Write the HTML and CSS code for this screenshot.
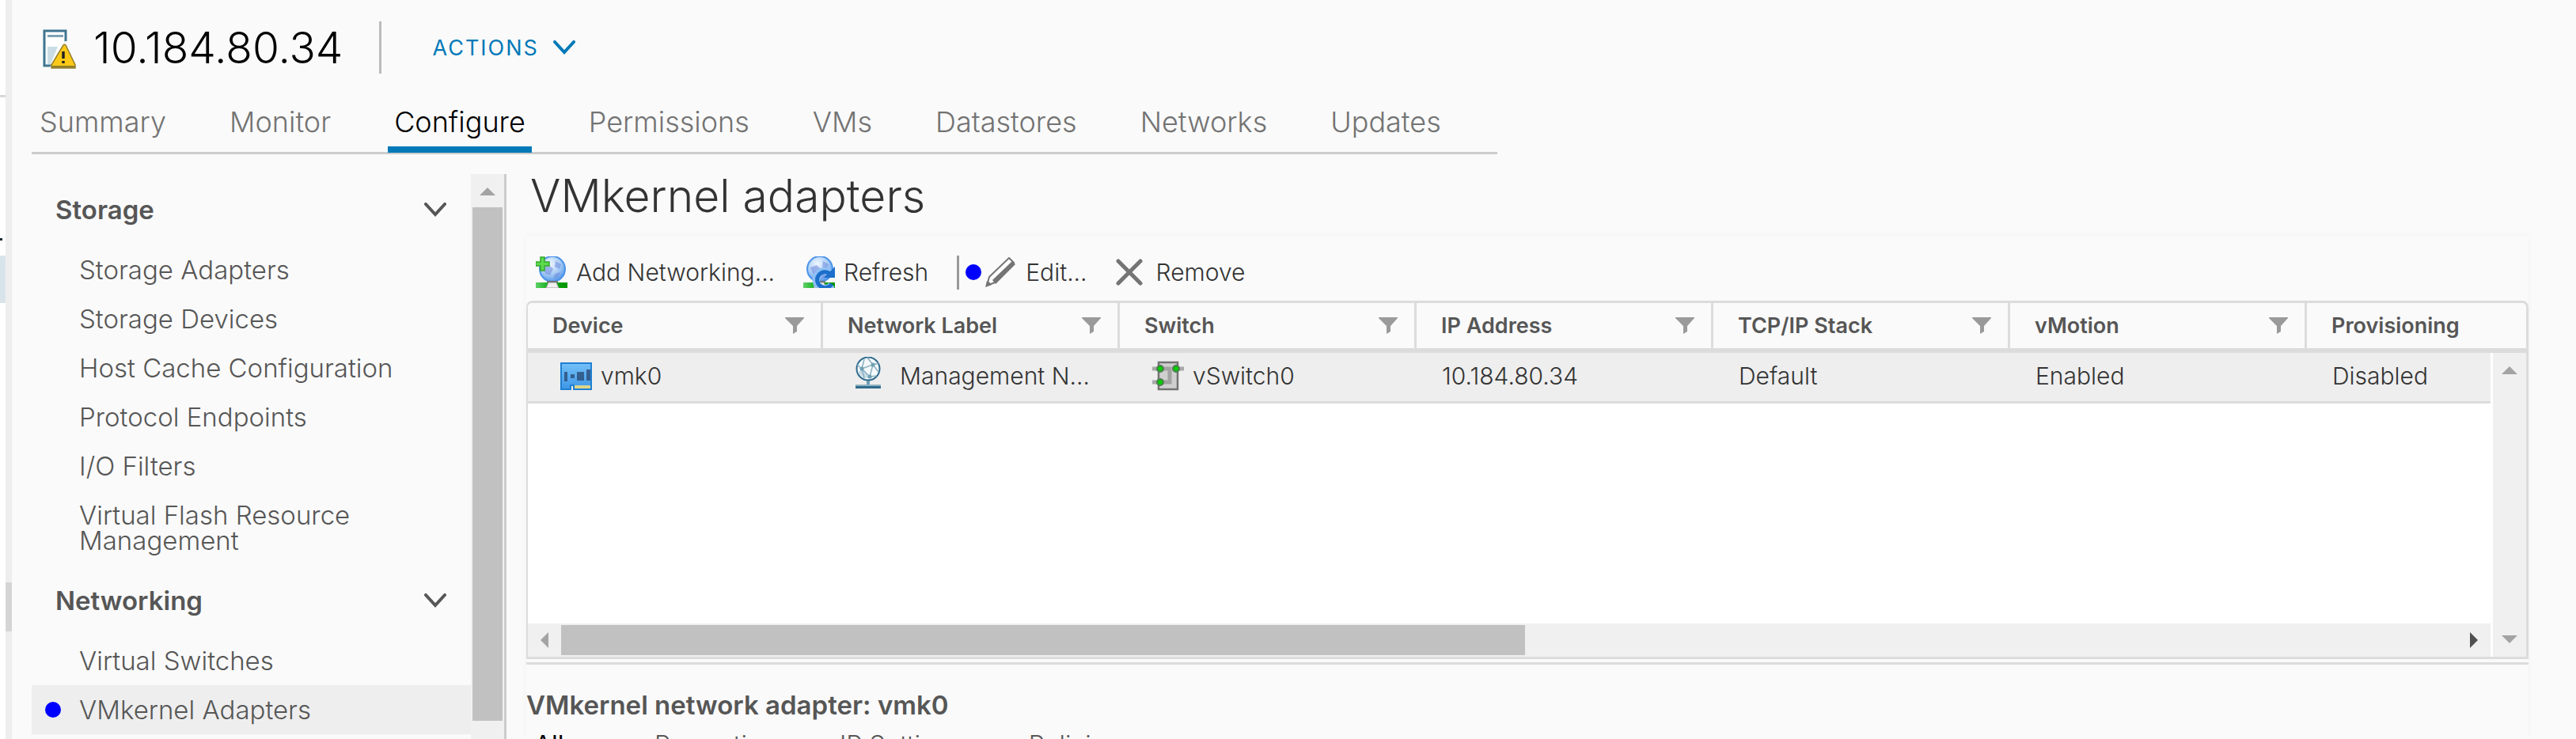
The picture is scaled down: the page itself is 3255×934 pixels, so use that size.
FILE: index.html
```html
<!DOCTYPE html>
<html lang="en">
<head>
<meta charset="utf-8">
<title>10.184.80.34 - VMkernel adapters</title>
<link rel="stylesheet" href="styles.css">
</head>
<body>
<svg class="defs" aria-hidden="true">
  <defs>
    <radialGradient id="globe" cx="40%" cy="30%" r="75%">
      <stop offset="0" stop-color="#f2f8ff"/><stop offset=".55" stop-color="#a9cdf6"/><stop offset="1" stop-color="#4a90e6"/>
    </radialGradient>
    <linearGradient id="grass"><stop offset="0" stop-color="#5fd06a"/><stop offset=".4" stop-color="#14b01c"/><stop offset="1" stop-color="#009400"/></linearGradient>
    <linearGradient id="card" x2="0" y2="1"><stop offset="0" stop-color="#74c0f8"/><stop offset="1" stop-color="#3d97e6"/></linearGradient>
    <symbol id="i-filter" viewBox="0 0 24 21"><path d="M0 0h24v1L15 11v7l-5 3V11L0 1z" fill="#9a9a9a"/></symbol>
    <symbol id="i-chevron" viewBox="0 0 28 18"><path d="M2 2l12 13L26 2" fill="none" stroke="currentColor" stroke-width="4" stroke-linecap="round"/></symbol>
    <symbol id="i-world" viewBox="0 0 40 40">
      <path d="M0 33h40v7H0z" fill="url(#grass)"/>
      <path d="M16 33h10l3 7H13z" fill="#f0f0f0" stroke="#999" stroke-width="1"/>
      <circle cx="21" cy="16" r="16" fill="url(#globe)" stroke="#4d94ea" stroke-width="2"/>
      <path d="M9 14l8-3 5 5-4 8-6-2zM25 6l7 4-2 6-6-3zM24 22l7-2-3 7-5 1z" fill="#7590de" opacity=".6"/>
      <path d="M14 31h14v2H14z" fill="#777"/>
    </symbol>
  </defs>
</svg>
<div class="app">
  <aside class="navigator" aria-hidden="true"><span class="nav-rule"></span><span class="nav-more"></span><span class="nav-selected"></span></aside>
  <div class="splitter" role="separator"><span class="splitter-grip"></span></div>
  <main class="workspace">
    <header class="object-header">
      <svg class="host-icon" viewBox="0 0 42 50" role="img" aria-label="Host warning">
        <path d="M2 2h27v44H2z" fill="#fff" stroke="#3f7590" stroke-width="3"/>
        <path d="M6 7h20v3H6z" fill="#7fa3b4"/><path d="M6 22h13L10 44H6z" fill="#cbdde4"/>
        <path d="M28 15L9 48h22V15z" fill="#fafafa"/>
        <path d="M26 20c1-1 2-1 3 0l12 25v4H11v-4z" fill="#fdc916" stroke="#94802b" stroke-width="1.5"/>
        <path d="M11 46h30v3H11z" fill="#94802b"/>
        <path d="M26 28v9M26 40v3" stroke="#222" stroke-width="3.5"/>
      </svg>
      <h1>10.184.80.34</h1>
      <button class="actions" type="button">ACTIONS <svg viewBox="0 0 28 18"><use href="#i-chevron"/></svg></button>
    </header>
    <nav class="tabs">
      <a href="#">Summary</a><a href="#">Monitor</a><a href="#" class="active" aria-current="page">Configure</a><a href="#">Permissions</a><a href="#">VMs</a><a href="#">Datastores</a><a href="#">Networks</a><a href="#">Updates</a>
    </nav>
    <div class="columns">
      <div class="side">
        <nav class="side-menu">
          <button type="button" class="group">Storage <svg viewBox="0 0 28 18"><use href="#i-chevron"/></svg></button>
          <a href="#">Storage Adapters</a>
          <a href="#">Storage Devices</a>
          <a href="#">Host Cache Configuration</a>
          <a href="#">Protocol Endpoints</a>
          <a href="#">I/O Filters</a>
          <a href="#">Virtual Flash Resource Management</a>
          <button type="button" class="group">Networking <svg viewBox="0 0 28 18"><use href="#i-chevron"/></svg></button>
          <a href="#">Virtual Switches</a>
          <a href="#" class="selected"><span class="dot"></span>VMkernel Adapters</a>
        </nav>
        <div class="vbar"><i class="arrow up"></i><span class="thumb"></span></div>
      </div>
      <section class="content">
        <h2>VMkernel adapters</h2>
        <div class="panel">
          <div class="toolbar">
            <button type="button">
              <svg class="ic40" viewBox="0 0 40 40"><use href="#i-world"/><path d="M6 1h5v6h6v5h-6v6H6v-6H0V7h6z" fill="#5ddb4d" stroke="#35a72c" stroke-width="1.5"/></svg>
              Add Networking...</button>
            <button type="button">
              <svg class="ic40" viewBox="0 0 40 40"><use href="#i-world"/><path d="M36 36a11 11 0 1 1-1-14" fill="none" stroke="#8fc0f4" stroke-width="9"/><path d="M40 13v14H26z" fill="#1c6fcb"/><path d="M36 35a10 10 0 1 1-2-13" fill="none" stroke="#1c6fcb" stroke-width="5"/></svg>
              Refresh</button>
            <span class="divider"></span>
            <button type="button" class="edit"><span class="dot"></span>
              <svg class="ic40" viewBox="0 0 40 40"><path d="M3 37l3-11L31 2l6 6L13 33z" fill="#fff" stroke="#747474" stroke-width="2" stroke-linejoin="round"/><path d="M35 6l4 4-25 25-4-5z" fill="#747474"/><path d="M1 39l2-8c3 1 5 3 6 5z" fill="#747474"/></svg>
              Edit...</button>
            <button type="button" class="remove"><svg class="ic34" viewBox="0 0 34 34"><path d="M3 3l28 28M31 3L3 31" stroke="#747474" stroke-width="5" stroke-linecap="round"/></svg>
              Remove</button>
          </div>
          <div class="grid">
            <table>
              <thead><tr>
                <th class="first"><span class="head">Device <svg><use href="#i-filter"/></svg></span></th>
                <th><span class="head">Network Label <svg><use href="#i-filter"/></svg></span></th>
                <th><span class="head">Switch <svg><use href="#i-filter"/></svg></span></th>
                <th><span class="head">IP Address <svg><use href="#i-filter"/></svg></span></th>
                <th><span class="head">TCP/IP Stack <svg><use href="#i-filter"/></svg></span></th>
                <th><span class="head">vMotion <svg><use href="#i-filter"/></svg></span></th>
                <th class="last"><span class="head">Provisioning</span></th>
              </tr></thead>
              <tbody><tr>
                <td class="with-icon"><span class="cell"><svg class="nic" viewBox="0 0 40 35"><path d="M1 1h38v33H17v-5h-4v5H1z" fill="url(#card)" stroke="#1f7fd2" stroke-width="2"/><path d="M5 12h4v12H5zM13 15h5v5h-5zM21 12h9v11h-9zM33 9h5v14h-5z" fill="#2b4c78" opacity=".8"/><path d="M18 29h20v4H18z" fill="#dcd68a"/></svg>vmk0</span></td>
                <td class="with-icon"><span class="cell label"><svg class="net" viewBox="0 0 32 40"><path d="M16 29v7" stroke="#6f9fb5" stroke-width="4"/><path d="M0 35h32v3H0z" fill="#8fb3c3"/><path d="M0 37h32v3H0z" fill="#2f6b8c"/><circle cx="16" cy="15" r="14.5" fill="#f4f9fb" stroke="#2f6b8c" stroke-width="2"/><path d="M3 20l5-5 10 12-8-1z" fill="#c4dbe5"/><path d="M2 10l6 5 14-5L15 1M22 10l7 9M22 10l-4 15L8 15M8 15l3 12M22 10l7-2M18 25l9-1M8 15L11 3" fill="none" stroke="#8aafc0" stroke-width="1.5"/><circle cx="8" cy="15" r="2.5" fill="#6f9fb5"/><circle cx="22" cy="10" r="2.5" fill="#6f9fb5"/><circle cx="18" cy="25" r="2.5" fill="#6f9fb5"/></svg><span class="clip">Management Network</span></span></td>
                <td class="with-icon"><span class="cell"><svg class="switch" viewBox="0 0 40 38"><path d="M0 10h40M0 27h12" stroke="#a8a8a8" stroke-width="5"/><path d="M8 2h24v34H8z" fill="#cfcfcf" stroke="#737373" stroke-width="2.5"/><path d="M10 10h12v17H10" fill="none" stroke="#a2a2a2" stroke-width="5"/><g fill="#0c0" stroke="#557a55" stroke-width="2"><circle cx="10" cy="10" r="4"/><circle cx="30" cy="10" r="4"/><circle cx="10" cy="27" r="4"/></g></svg>vSwitch0</span></td>
                <td>10.184.80.34</td><td>Default</td><td>Enabled</td><td class="last">Disabled</td>
              </tr></tbody>
            </table>
            <div class="vbar grid-v"><i class="arrow up"></i><i class="arrow down"></i></div>
            <div class="hbar"><i class="arrow left"></i><span class="thumb"></span><i class="arrow right"></i></div>
          </div>
          <section class="details">
            <h3>VMkernel network adapter: vmk0</h3>
            <nav class="subtabs"><a href="#" class="active">All</a><a href="#">Properties</a><a href="#">IP Settings</a><a href="#">Policies</a></nav>
          </section>
        </div>
      </section>
    </div>
  </main>
</div>
</body>
</html>
```
FILE: styles.css
```css
* { box-sizing: border-box; }
html, body { height: 100%; margin: 0; }
body { overflow: hidden; background: #fafafa; color: #565656; font-family: Inter, "Open Sans", sans-serif; font-size: 30px; font-weight: 300; }
a { color: inherit; text-decoration: none; }
button { margin: 0; padding: 0; border: 0; background: none; color: inherit; font: inherit; text-align: left; }
h1, h2, h3 { margin: 0; font-weight: 300; }
svg { flex: none; display: block; }
.defs { position: absolute; width: 0; height: 0; }

.app { display: flex; height: 100vh; overflow: hidden; }
.navigator { flex: none; width: 7px; background: #fff; }
.navigator span { display: block; }
.nav-rule { margin-top: 120px; height: 3px; background: #d8d8d8; }
.nav-more { margin-top: 178px; width: 3px; height: 3px; background: #1b2a32; }
.nav-selected { margin-top: 19px; height: 60px; background: #d9e4ea; }
.splitter { display: flex; flex: none; align-items: flex-start; width: 8px; background: #eee; }
.splitter-grip { width: 8px; height: 62px; margin-top: 736px; background: #d5d5d5; }
.workspace { display: flex; flex: 1; flex-direction: column; min-width: 0; padding-left: 25px; }

.object-header { display: flex; flex: none; align-items: center; height: 120px; padding: 0 14px; }
.host-icon { width: 42px; height: 50px; margin-top: 4px; }
h1 { margin-left: 22px; padding-right: 46px; color: #000; font-size: 55px; line-height: 62px; }
.actions { display: flex; align-items: center; gap: 18px; height: 66px; padding-left: 64px; border-left: 3px solid #bbb; color: #0079b8; font-size: 27px; font-weight: 400; letter-spacing: 2px; }
.actions svg { width: 28px; height: 24px; }

.tabs { display: flex; flex: none; gap: 64px; align-self: flex-start; width: 1852px; max-width: 100%; height: 75px; padding-left: 2px; border-bottom: 3px solid #ccc; color: #737373; font-size: 36px; line-height: 68px; }
.tabs a { height: 73px; padding: 0 8px; }
.tabs .active { border-bottom: 8px solid #0079b8; color: #000; }

.columns { display: flex; flex: 1; min-height: 0; padding-top: 25px; }
.side { display: flex; flex: none; width: 600px; border-right: 3px solid #ccc; }
.side-menu { flex: 1; overflow: hidden; font-size: 33px; line-height: 32px; }
.group { display: flex; align-items: center; justify-content: space-between; width: 100%; height: 90px; padding: 0 31px 0 30px; font-weight: 600; }
.group svg { width: 28px; height: 18px; }
.side-menu a { display: block; position: relative; padding: 15px 60px; }
.side-menu .selected { background: #eee; }
.dot { width: 20px; height: 20px; border-radius: 50%; background: #00f; }
.selected .dot { position: absolute; left: 17px; top: 21px; }

.vbar { display: flex; flex: none; flex-direction: column; align-items: center; width: 42px; padding: 17px 2px; background: #f0f0f0; }
.vbar .thumb { width: 100%; height: 649px; margin-top: 15px; background: #c1c1c1; }
.arrow { flex: none; border: 10px solid transparent; }
.up { border-top: 0; border-bottom-color: #a3a3a3; }
.down { border-bottom: 0; border-top-color: #a3a3a3; }
.left { border-left: 0; border-right-color: #a3a3a3; }
.right { border-right: 0; border-left-color: #505050; }

.content { flex: 1; min-width: 0; padding: 0 60px 0 25px; }
h2 { height: 78px; padding-left: 5px; color: #333; font-size: 57px; line-height: 56px; }
.panel { height: 636px; box-shadow: 0 0 6px #f1f1f1; }
.toolbar { display: flex; align-items: center; height: 82px; padding: 10px 12px 0; color: #333; font-size: 30px; line-height: 40px; }
.toolbar button { display: flex; align-items: center; gap: 11px; margin-right: 36px; }
.ic40 { width: 40px; height: 40px; }
.ic34 { width: 34px; height: 34px; }
.toolbar .divider { width: 3px; height: 43px; background: #999; }
.toolbar .edit { gap: 4px; margin-left: 8px; }
.edit .ic40 { margin-right: 8px; }
.toolbar .remove { gap: 17px; }

.grid { display: grid; grid-template-columns: 1fr 45px; grid-template-rows: 1fr 42px; height: 453px; border: 3px solid #dcdcdc; border-width: 3px 3px 3px 2px; border-radius: 8px 8px 0 0; background: #fff; }
table { grid-column: 1 / 3; grid-row: 1; align-self: start; width: 100%; border-collapse: separate; border-spacing: 0; table-layout: fixed; }
th, td { width: 375px; padding: 0; text-align: left; }
th.first { width: 373px; border-radius: 6px 0 0 0; }
th.last, td.last { width: auto; }
th { height: 63px; border-bottom: 6px solid #dcdcdc; border-right: 3px solid #dcdcdc; background: #fafafa; font-size: 27px; font-weight: 600; }
th.last { border-right: 0; border-radius: 0 6px 0 0; }
.head { display: flex; align-items: center; justify-content: space-between; padding: 0 21px 0 31px; }
.head svg { width: 24px; height: 21px; }
td { height: 64px; padding: 0 32px 3px; border-bottom: 3px solid #dcdcdc; background: #eee; color: #333; font-size: 30px; }
td.with-icon { padding: 0 30px 3px 41px; }
.cell { display: flex; align-items: center; gap: 11px; }
.nic { width: 40px; height: 35px; }
.net { width: 32px; height: 40px; margin-bottom: 8px; }
.switch { width: 40px; height: 38px; }
.label { gap: 24px; height: 40px; }
.clip { overflow: hidden; text-overflow: ellipsis; white-space: nowrap; }
.grid-v { grid-column: 2; grid-row: 1 / 3; justify-content: space-between; width: 45px; margin-top: 63px; border-left: 3px solid #fff; }
.hbar { display: flex; grid-column: 1; grid-row: 2; align-items: center; padding: 2px 16px; background: #f0f0f0; }
.hbar .thumb { width: calc(50% - 6px); height: 38px; margin-left: 16px; background: #c1c1c1; }
.hbar .right { margin-left: auto; }

.details { margin-top: 4px; border-top: 3px solid #dcdcdc; }
h3 { padding-top: 30px; font-size: 33px; font-weight: 600; line-height: 42px; }
.subtabs { display: flex; gap: 82px; padding: 10px 10px 0; font-size: 32px; line-height: 40px; }
.subtabs .active { min-width: 70px; color: #000; font-weight: 400; }
```
